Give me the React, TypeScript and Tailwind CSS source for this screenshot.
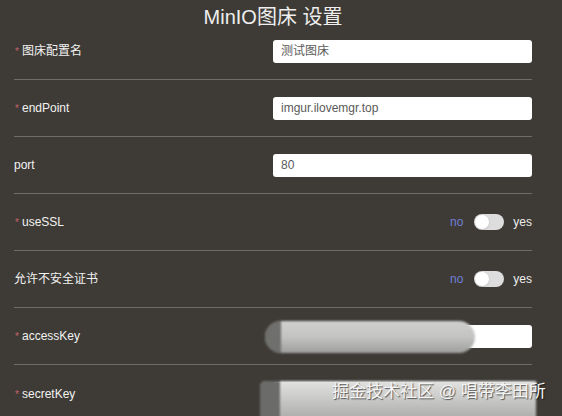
import React from "react";

type Field = {
  label: string;
  required?: boolean;
  kind: "input" | "switch" | "secret";
  value?: string;
};

const fields: Field[] = [
  { label: "图床配置名", required: true, kind: "input", value: "测试图床" },
  { label: "endPoint", required: true, kind: "input", value: "imgur.ilovemgr.top" },
  { label: "port", kind: "input", value: "80" },
  { label: "useSSL", required: true, kind: "switch" },
  { label: "允许不安全证书", kind: "switch" },
  { label: "accessKey", required: true, kind: "secret" },
  { label: "secretKey", required: true, kind: "secret" },
];

function Toggle() {
  return (
    <div className="flex items-center text-[12px]">
      <span className="text-[#6f7fd6]">no</span>
      <div className="ml-[11px] mr-[9px] w-[30px] h-[16px] rounded-full bg-[#dddddd] flex items-center px-[1px]">
        <div className="w-[14px] h-[14px] rounded-full bg-white shadow-sm" />
      </div>
      <span className="text-[#ededed]">yes</span>
    </div>
  );
}

export default function App() {
  return (
    <div
      className="relative w-[562px] h-[416px] overflow-hidden bg-[#3e3b36] text-[#f2f2f2]"
      style={{ fontFamily: '"Liberation Sans", "Noto Sans CJK SC", sans-serif' }}
    >
      <div className="ml-[14px] w-[518px]">
        <div className="h-[23px] pt-[5px] text-center text-[20px] leading-[24px] text-[#eeeeee]">
          MinIO图床 设置
        </div>
        {fields.map((f, i) => (
          <div
            key={f.label}
            className={
              "relative flex items-center h-[57px] " +
              (i < fields.length - 1 ? "border-b border-[#6f6b66]" : "")
            }
          >
            <div className="w-[259px] flex items-start text-[12px] leading-[16px]">
              {f.required && (
                <span className="w-[8px] pl-[1px] mt-[3px] text-[10px] leading-[12px] text-[#c4606e]">*</span>
              )}
              <span>{f.label}</span>
            </div>
            <div className="flex-1 flex justify-end">
              {f.kind === "switch" ? (
                <Toggle />
              ) : (
                <div className="w-full h-[23px] rounded-[3px] bg-white px-[8px] flex items-center text-[12px] text-[#5a5a5a]">
                  {f.value}
                </div>
              )}
            </div>
            {f.kind === "secret" && i === 5 && (
              <div className="absolute left-[251px] top-[13px] w-[210px] h-[32px] rounded-full bg-gradient-to-b from-[#d0d1cf] via-[#c3c4c2] to-[#9e9f9d] blur-[1px] overflow-hidden">
                <div className="w-[16px] h-full bg-[#6f6f6d]" />
              </div>
            )}
            {f.kind === "secret" && i === 6 && (
              <div className="absolute left-[246px] top-[16px] w-[276px] h-[40px] rounded-tl-[6px] bg-gradient-to-b from-[#e2e3e1] via-[#c6c7c5] to-[#a9aaa8] blur-[1px] overflow-hidden">
                <div className="w-[20px] h-full bg-[#6b6b69]" />
              </div>
            )}
          </div>
        ))}
      </div>
      <div
        className="absolute left-[332px] top-[382px] text-[17px] leading-[20px] text-[#f4f4f4]"
        style={{ textShadow: "1px 1px 1px rgba(0,0,0,0.6)" }}
      >
        掘金技术社区 @ 唱带李田所
      </div>
    </div>
  );
}
